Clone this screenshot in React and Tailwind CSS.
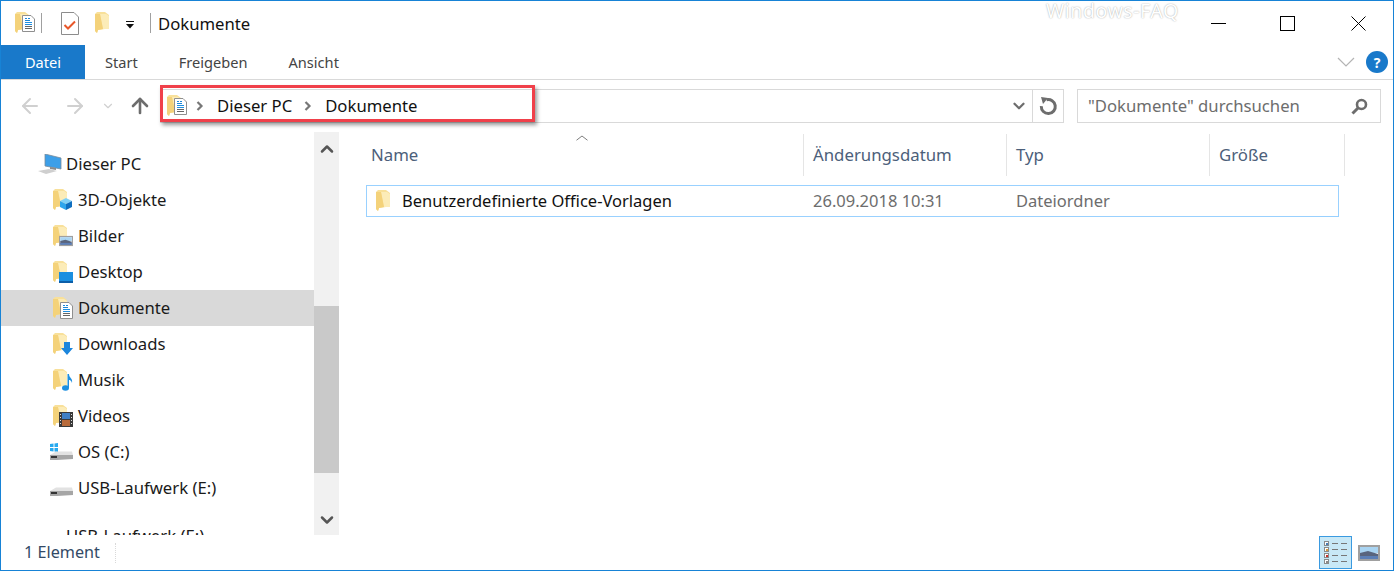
import { ArrowLeft, ArrowRight, ArrowUp, ChevronDown, ChevronUp } from "lucide-react";

const FONT = { fontFamily: '"Noto Sans", "Open Sans", sans-serif' };

function Folder({ className = "w-[15px] h-[22px]" }) {
  return (
    <svg viewBox="0 0 15 22" className={className}>
      <path d="M0 2 L2 0 H10 L14 3 V17 L10 17 L3 18 L2 21 L0 19 Z" fill="#f8e09a" />
      <path d="M5 2 H11 L14 4 V17 H8 Z" fill="#fcecb8" />
      <path d="M0 2 L5 2 L8 17 L3 18 L2 21 L0 19 Z" fill="#f4d27a" />
    </svg>
  );
}

function DocBadge() {
  return (
    <svg viewBox="0 0 13 17" className="w-[13px] h-[17px]">
      <path d="M.5.5 H9 L12.500 4 V16.500 H.5 Z" fill="#fff" stroke="#8f8f8f" />
      <path d="M3 3.500h2M6 3.500h2M3 5.500h5" stroke="#1b87d8" />
      <path d="M3 7.500h7M3 9.500h7" stroke="#1f8fe0" />
      <path d="M3 11.500h7M3 13.500h7" stroke="#666" />
    </svg>
  );
}

function Badge3d() {
  return (
    <svg viewBox="0 0 14 14" className="w-[14px] h-[14px]">
      <path d="M1 4 L7 1 L13 4 L7 7 Z" fill="#7fd0f7" />
      <path d="M1 4 L7 7 V13 L1 10 Z" fill="#2ea5ec" />
      <path d="M7 7 L13 4 V10 L7 13 Z" fill="#0f6fc0" />
    </svg>
  );
}

function PictureIcon({ className = "w-[14px] h-[12px]" }) {
  return (
    <svg viewBox="0 0 22 16" className={className}>
      <rect x="1" y="1" width="20" height="14" fill="#fff" stroke="#a0a0a0" strokeWidth="2" />
      <rect x="2" y="2" width="18" height="6" fill="#a9d4f2" />
      <path d="M2 8 L10 6 L20 9 V14 H2 Z" fill="#59657e" />
      <rect x="2" y="11" width="18" height="3" fill="#5c7fb6" />
    </svg>
  );
}

function DesktopBadge() {
  return (
    <svg viewBox="0 0 14 11" className="w-[14px] h-[11px]">
      <rect width="14" height="9" fill="#1a8fe0" />
      <rect y="9" width="14" height="2" fill="#0c5ea8" />
    </svg>
  );
}

function DownloadBadge() {
  return (
    <svg viewBox="0 0 12 13" className="w-[12px] h-[13px]">
      <path d="M3 0 H9 V6 H12 L6 13 L0 6 H3 Z" fill="#1c86dc" />
    </svg>
  );
}

function MusicBadge() {
  return (
    <svg viewBox="0 0 11 17" className="w-[11px] h-[17px]">
      <ellipse cx="3.500" cy="14" rx="3.500" ry="2.800" fill="#1c8fe0" />
      <path d="M5.500 14 V0 H7 C7 4 11 4 10 9 C9 6 8 6 7 6 V14 Z" fill="#1c8fe0" />
    </svg>
  );
}

function VideoBadge() {
  return (
    <svg viewBox="0 0 14 15" className="w-[14px] h-[15px]">
      <rect width="14" height="15" fill="#3a3a3a" />
      <rect x="3" y="1" width="8" height="6" fill="#3f7fc4" />
      <rect x="3" y="8" width="8" height="6" fill="#b86a3a" />
      <path d="M1 2.500h1M1 5.500h1M1 8.500h1M1 11.500h1M12 2.500h1M12 5.500h1M12 8.500h1M12 11.500h1" stroke="#ddd" />
    </svg>
  );
}

function Drive({ windows }) {
  return (
    <svg viewBox="0 0 23 18" className="w-[23px] h-[18px] shrink-0">
      {windows && <path d="M0 1 L3.500 .5 V4 H0 Z M4.500 .4 L8 0 V4 H4.500 Z M0 5 H3.500 V8.500 L0 8 Z M4.500 5 H8 V9 L4.500 8.600 Z" fill="#27a9ef" />}
      <path d="M0 12 L6 8.500 H22 L23 12 Z" fill="#e2e2e2" />
      <path d="M0 12 H23 V16 L7 17 H0 Z" fill="#a6a6a6" />
      <path d="M1 13 H7 V15 H1 Z" fill="#333" />
    </svg>
  );
}

function PcIcon() {
  return (
    <svg viewBox="0 0 24 21" className="w-[24px] h-[21px] shrink-0">
      <path d="M7 0 L23 4 V15 L7 12 Z" fill="#3d9fe8" stroke="#7a8a99" strokeWidth=".8" />
      <path d="M12 13 L18 14 V16 L12 15 Z" fill="#8b8b8b" />
      <path d="M0 17 L11 15 L19 17 L8 20 Z" fill="#cfcfcf" />
    </svg>
  );
}

function CheckDoc() {
  return (
    <svg viewBox="0 0 18 23" className="w-[18px] h-[23px]">
      <path d="M.5 .5 H13 L17.500 5 V22.500 H.5 Z" fill="#fff" stroke="#8c8c8c" />
      <path d="M3.500 13 L7 16.500 L14 9.500" fill="none" stroke="#e8572a" strokeWidth="2" />
    </svg>
  );
}

function DocFolder() {
  return (
    <div className="relative w-[20px] h-[22px]">
      <Folder />
      <div className="absolute right-0 bottom-[2px]"><DocBadge /></div>
    </div>
  );
}

function Crumb() {
  return (
    <svg viewBox="0 0 8 10" className="w-[8px] h-[10px] shrink-0">
      <path d="M1.500 1 L5.500 5 L1.500 9" fill="none" stroke="#777" strokeWidth="2.200" />
    </svg>
  );
}

function NavItem({ label, icon, selected, indent = "pl-[52px]", gap = "gap-[9px]" }) {
  return (
    <div className={`h-[36px] flex items-center ${indent} ${gap} text-[16.7px] text-[#1a1a1a] ${selected ? "bg-[#d9d9d9]" : ""}`}>
      <div className="w-[16px] h-[24px] flex items-center relative shrink-0">{icon}</div>
      <span>{label}</span>
    </div>
  );
}

function Overlaid({ badge, className = "right-[-4px] bottom-[1px]" }) {
  return (
    <>
      <Folder />
      <div className={`absolute ${className}`}>{badge}</div>
    </>
  );
}

function Column({ label, className }) {
  return (
    <div className={`h-[42px] flex items-center border-r border-[#e5e5e5] text-[16.8px] text-[#4c607a] ${className}`}>{label}</div>
  );
}

export default function App() {
  return (
    <div style={FONT} className="w-[1394px] h-[571px] bg-white border border-[#1783d6] flex flex-col overflow-hidden">
      {/* title bar */}
      <div className="h-[44px] flex items-center relative shrink-0">
        <div className="ml-[14px]"><DocFolder /></div>
        <div className="w-px h-[20px] bg-[#a0a0a0] ml-[6px]" />
        <div className="ml-[19px]"><CheckDoc /></div>
        <div className="ml-[16px]"><Folder /></div>
        <svg viewBox="0 0 10 8" className="w-[10px] h-[8px] ml-[15px] mt-[3px]">
          <path d="M1 .5h8" stroke="#111" />
          <path d="M1 3h8L5 7.500Z" fill="#111" />
        </svg>
        <div className="w-px h-[20px] bg-[#a0a0a0] ml-[15px]" />
        <span className="ml-[7px] mt-[1px] text-[16.7px] text-[#111]">Dokumente</span>
        <span className="absolute left-[1045px] top-0 text-[19.6px] leading-none tracking-[0.5px] text-white [text-shadow:0_0_1.5px_#9a9a9a]">Windows-FAQ</span>
        <div className="ml-auto flex items-center">
          <svg viewBox="0 0 15 1" className="w-[15px] h-[1px] mr-[54px] mt-[1px]"><path d="M0 .5h15" stroke="#000" /></svg>
          <div className="w-[15px] h-[15px] border border-black mr-[56px]" />
          <svg viewBox="0 0 15 15" className="w-[15px] h-[15px] mr-[27px]"><path d="M.5.5l14 14M14.500.5l-14 14" stroke="#000" fill="none" /></svg>
        </div>
      </div>

      {/* ribbon tabs */}
      <div className="h-[35px] flex items-center border-b border-[#d9d9d9] shrink-0 text-[14.6px] text-[#444]">
        <div className="w-[84px] h-full bg-[#1979ca] text-white flex items-center justify-center pt-[1px]">Datei</div>
        <span className="ml-[20px] mt-[1px]">Start</span>
        <span className="ml-[41px] mt-[1px]">Freigeben</span>
        <span className="ml-[41px] mt-[1px]">Ansicht</span>
        <div className="ml-auto flex items-center">
          <svg viewBox="0 0 18 10" className="w-[18px] h-[10px] mr-[11px]"><path d="M1 1l8 8 8-8" fill="none" stroke="#b4b4b4" strokeWidth="1.200" /></svg>
          <div className="w-[22px] h-[22px] rounded-full bg-[#1979ca] text-white text-[14px] font-bold flex items-center justify-center mr-[5px]">?</div>
        </div>
      </div>

      {/* address bar */}
      <div className="h-[52px] flex items-center shrink-0 relative">
        <ArrowLeft size={24} strokeWidth={2} className="ml-[17px] text-[#d0d0d0]" />
        <ArrowRight size={24} strokeWidth={2} className="ml-[21px] text-[#d0d0d0]" />
        <ChevronDown size={14} strokeWidth={2} className="ml-[14px] text-[#d0d0d0]" />
        <ArrowUp size={24} strokeWidth={2.6} className="ml-[13px] text-[#6d6d6d]" />
        <div className="ml-[8px] w-[904px] h-[34px] border border-[#d9d9d9] flex items-center">
          <div className="ml-[6px]"><DocFolder /></div>
          <div className="ml-[9px]"><Crumb /></div>
          <span className="ml-[13px] text-[16.7px] text-[#111]">Dieser PC</span>
          <div className="ml-[12px]"><Crumb /></div>
          <span className="ml-[13px] text-[16.7px] text-[#111]">Dokumente</span>
          <ChevronDown size={18} strokeWidth={3} className="ml-auto mr-[4px] text-[#6d6d6d]" />
          <div className="w-px h-full bg-[#d9d9d9]" />
          <svg viewBox="0 0 20 20" className="w-[20px] h-[20px] mx-[5px]">
            <path d="M6 5 A7 7 0 1 1 4 13" fill="none" stroke="#6d6d6d" strokeWidth="3" transform="rotate(25 10 10)" />
            <path d="M3 1 L10 2 L5 8 Z" fill="#6d6d6d" />
          </svg>
        </div>
        <div className="ml-[13px] w-[304px] h-[34px] border border-[#d9d9d9] flex items-center pl-[10px] pr-[12px] text-[16.7px] text-[#6d6d6d]">
          <span>"Dokumente" durchsuchen</span>
          <svg viewBox="0 0 17 17" className="w-[17px] h-[17px] ml-auto">
            <circle cx="10.500" cy="6.500" r="4.500" fill="none" stroke="#6d6d6d" strokeWidth="2.600" />
            <path d="M7 10 L1.500 15.500" stroke="#6d6d6d" strokeWidth="3" />
          </svg>
        </div>
        {/* red highlight */}
        <div className="absolute left-[159px] top-[5px] w-[375px] h-[37px] border-[3px] border-[#f0404a] shadow-[2px_3px_4px_rgba(0,0,0,0.4)]" />
      </div>

      {/* main area */}
      <div className="h-[403px] flex shrink-0">
        <div className="w-[313px] h-full overflow-hidden pt-[14px] shrink-0">
          <NavItem label="Dieser PC" indent="pl-[37px]" gap="gap-[12px]" icon={<PcIcon />} />
          <NavItem label="3D-Objekte" icon={<Overlaid badge={<Badge3d />} />} />
          <NavItem label="Bilder" icon={<Overlaid badge={<PictureIcon />} />} />
          <NavItem label="Desktop" icon={<Overlaid badge={<DesktopBadge />} />} />
          <NavItem label="Dokumente" selected icon={<Overlaid badge={<DocBadge />} />} />
          <NavItem label="Downloads" icon={<Overlaid badge={<DownloadBadge />} />} />
          <NavItem label="Musik" icon={<Overlaid badge={<MusicBadge />} />} />
          <NavItem label="Videos" icon={<Overlaid badge={<VideoBadge />} />} />
          <NavItem label="OS (C:)" indent="pl-[49px]" gap="gap-[12px]" icon={<Drive windows />} />
          <NavItem label="USB-Laufwerk (E:)" indent="pl-[49px]" gap="gap-[12px]" icon={<Drive />} />
          <div className="h-[36px] mt-[12px] pl-[65px] text-[16.7px] text-[#1a1a1a] flex items-center">USB-Laufwerk (E:)</div>
        </div>

        {/* scrollbar */}
        <div className="w-[25px] h-full bg-[#f1f1f1] flex flex-col items-center shrink-0">
          <div className="h-[174px] w-full flex justify-center pt-[7px]"><ChevronUp size={20} strokeWidth={3} className="text-[#555]" /></div>
          <div className="h-[167px] w-full bg-[#c9c9c9]" />
          <div className="flex-1 w-full flex justify-center items-end pb-[5px]"><ChevronDown size={20} strokeWidth={3} className="text-[#555]" /></div>
        </div>

        {/* file list */}
        <div className="flex-1 relative pl-[27px]">
          <ChevronUp size={16} strokeWidth={1} className="absolute left-[235px] top-[-2px] scale-x-[1.3] text-[#555]" />
          <div className="flex h-[42px] mt-[2px]">
            <Column label="Name" className="w-[438px] pl-[5px]" />
            <Column label="Änderungsdatum" className="w-[203px] pl-[9px]" />
            <Column label="Typ" className="w-[203px] pl-[9px]" />
            <Column label="Größe" className="w-[135px] pl-[9px]" />
          </div>
          <div className="w-[973px] h-[32px] mt-[9px] border border-[#99d1ff] flex items-center text-[16.5px]">
            <div className="ml-[9px] w-[26px]"><Folder className="w-[15px] h-[22px]" /></div>
            <span className="w-[411px] text-[#111]">Benutzerdefinierte Office-Vorlagen</span>
            <span className="w-[203px] text-[#6d6d6d]">26.09.2018 10:31</span>
            <span className="text-[#6d6d6d]">Dateiordner</span>
          </div>
        </div>
      </div>

      {/* status bar */}
      <div className="flex-1 flex items-center text-[16.2px] text-[#334a66]">
        <span className="ml-[23px]">1 Element</span>
        <div className="w-px h-[20px] ml-[15px] border-l border-dotted border-[#d9d9d9]" />
        <div className="ml-auto w-[33px] h-[33px] bg-[#c8e8f6] border border-[#3a9ae0] flex flex-col items-center justify-center gap-[1px]">
          {["#4a7fb5", "#d89a3a", "#c8322a", "#8a8a8a"].map((c) => (
            <div key={c} className="flex items-center gap-[3px]">
              <div className="w-[5px] h-[5px] border border-[#8a8a8a] bg-white flex items-center justify-center">
                <div className="w-[2px] h-[2px]" style={{ background: c }} />
              </div>
              <div className="w-[6px] h-px bg-[#777]" />
              <div className="w-[6px] h-px bg-[#777]" />
            </div>
          ))}
        </div>
        <div className="ml-[6px] mr-[13px]"><PictureIcon className="w-[22px] h-[16px]" /></div>
      </div>
    </div>
  );
}
